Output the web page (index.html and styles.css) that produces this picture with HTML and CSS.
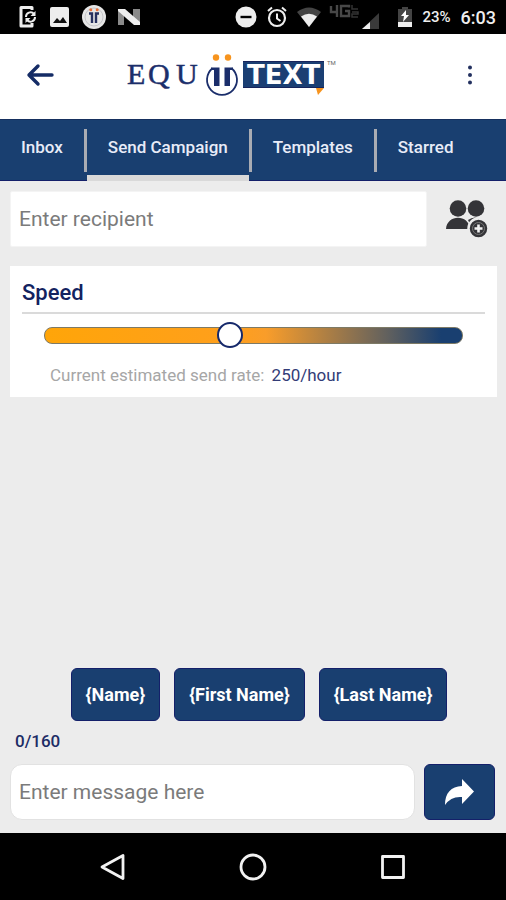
FILE: index.html
```html
<!DOCTYPE html>
<html lang="en">
<head>
<meta charset="utf-8">
<meta name="viewport" content="width=device-width, initial-scale=1">
<title>EquiiText – Send Campaign</title>
<link rel="stylesheet" href="styles.css">
</head>
<body>
<div class="status">
  <div class="status-group status-left">
    <svg width="20" height="24" viewBox="0 0 20 24" aria-hidden="true"><path d="M14 5V2.500H3V21h11v-3" fill="none" stroke="#eee" stroke-width="3" stroke-linejoin="round"/><path d="M8 12a4.500 4.500 0 0 1 8-3M17 12a4.500 4.500 0 0 1-8 3" fill="none" stroke="#eee" stroke-width="2"/><path d="M17.500 6v5h-5zM7.500 18v-5h5z" fill="#eee"/></svg>
    <svg width="20" height="20" viewBox="0 0 20 20" aria-hidden="true"><rect x="0" y="0" width="19" height="20" rx="2" fill="#eee"/><path d="M3 16l4-5 3 3 3-4 4 6z" fill="#111"/></svg>
    <svg width="24" height="24" viewBox="0 0 24 24" aria-hidden="true"><circle cx="12" cy="12" r="12" fill="#e6e6e6"/><circle cx="12" cy="12" r="9" fill="none" stroke="#c4c4c8"/><path d="M7 8.500h3V18M17 8.500h-3V18" fill="none" stroke="#26305f" stroke-width="2.400"/><circle cx="8.800" cy="4.800" r="1.500" fill="#e8703a"/><circle cx="15.200" cy="4.800" r="1.500" fill="#e8703a"/></svg>
    <svg width="22" height="18" viewBox="0 0 22 18" aria-hidden="true"><path d="M0 3l6 0v14H0zM15 1h7v14h-7z" fill="#8a8a8a"/><path d="M0 1h7l15 13v3h-6L0 3z" fill="#eee"/></svg>
  </div>
  <div class="status-group status-right">
    <svg width="22" height="22" viewBox="0 0 22 22" aria-hidden="true"><circle cx="11" cy="11" r="10.500" fill="#eee"/><path d="M5.500 11h11" stroke="#000" stroke-width="2.400"/></svg>
    <svg width="20" height="22" viewBox="0 0 20 22" aria-hidden="true"><circle cx="10" cy="12" r="8" fill="none" stroke="#eee" stroke-width="2.200"/><path d="M10 7.500V12.500l3.500 2.500M1 5l4-3.500M19 5l-4-3.500" fill="none" stroke="#eee" stroke-width="2"/></svg>
    <svg width="24" height="20" viewBox="0 0 24 20" aria-hidden="true"><path d="M0 5Q12-4 24 5L12 20z" fill="#444"/><path d="M4 9.500Q12 4 20 9.500L12 20z" fill="#eee"/></svg>
    <svg class="signal" width="52" height="26" viewBox="0 0 52 26" aria-hidden="true"><path d="M4 2v6h7M10 1v12M22 3.500V2H14v10h8V7h-4" fill="none" stroke="#484848" stroke-width="2.400"/><path d="M25 1v4h6M25 8h6v2h-6v3h6" fill="none" stroke="#333" stroke-width="1.500"/><path d="M35 25L52 9v16z" fill="#3a3a3a"/><path d="M35 25l8-7v7z" fill="#eee"/></svg>
    <svg width="14" height="20" viewBox="0 0 14 20" aria-hidden="true"><path d="M4 0h6v2h4v13H0V2h4z" fill="#444"/><path d="M0 15h14v5H0z" fill="#eee"/><path d="M8 3l-5 6h3l-1 6 6-7H8z" fill="#fff"/></svg>
    <span class="battery">23%</span>
    <span class="clock">6:03</span>
  </div>
</div>

<header class="header">
  <button class="icon-button" type="button" aria-label="Back">
    <svg width="28" height="24" viewBox="0 0 28 24"><path d="M26 12H3M12 3L3 12l9 9" fill="none" stroke="#152c66" stroke-width="3.400" stroke-linecap="round" stroke-linejoin="round"/></svg>
  </button>
  <svg class="logo" width="210" height="44" viewBox="0 0 210 44" role="img" aria-label="EquiiText">
    <g class="logo-equ"><text x="0" y="31">E</text><text x="21" y="31">Q</text><text x="49" y="31">U</text></g>
    <path d="M85.500 15.200A15 15 0 1 0 104.500 15.200" fill="none" stroke="#1b2e6b" stroke-width="1.800"/>
    <path d="M84 14.500h8.500V33H87V17h-3zM106 14.500h-8.500V33h5.500V17h3z" fill="#1b2e6b"/>
    <circle cx="89" cy="4.500" r="3.200" fill="#f7941e"/><circle cx="101" cy="4.500" r="3.200" fill="#f7941e"/>
    <rect x="116" y="8" width="81" height="27" fill="#1b3f73"/>
    <path d="M116 8.500h81M116 34.500h81" stroke="#16245c"/>
    <path d="M189 35h8l-6 7z" fill="#f7941e"/>
    <text class="logo-text" x="120" y="31">TEXT</text>
    <text class="logo-tm" x="200" y="12">TM</text>
  </svg>
  <button class="icon-button" type="button" aria-label="More options">
    <svg width="6" height="20" viewBox="0 0 6 20"><g fill="#22305f"><circle cx="3" cy="2.500" r="2"/><circle cx="3" cy="10" r="2"/><circle cx="3" cy="17.500" r="2"/></g></svg>
  </button>
</header>

<nav class="tabs" aria-label="Sections">
  <a class="tab" href="#inbox">Inbox</a>
  <a class="tab tab-active" href="#campaign" aria-current="page">Send Campaign</a>
  <a class="tab" href="#templates">Templates</a>
  <a class="tab" href="#starred">Starred</a>
</nav>

<main class="main">
  <div class="recipient-row">
    <input class="field recipient" type="text" placeholder="Enter recipient" aria-label="Recipient">
    <button class="contacts" type="button" aria-label="Add contacts">
      <svg width="42" height="38" viewBox="0 0 42 38"><g fill="#343438"><circle cx="12" cy="8.500" r="8.300"/><circle cx="30" cy="8.500" r="8.300"/><path d="M0 29C1 14 23 14 24 29zM22 20Q29 15 35 20L24 24z"/><circle cx="32.500" cy="28.500" r="10" stroke="#ececec" stroke-width="2.500"/></g><circle cx="32.500" cy="28.500" r="6" fill="none" stroke="#777" stroke-width="1"/><path d="M32.500 24.500v8M28.500 28.500h8" stroke="#f2f2f2" stroke-width="2.600"/></svg>
    </button>
  </div>

  <section class="card">
    <h2 class="card-title"><label for="speed">Speed</label></h2>
    <div class="card-body">
      <input class="slider" id="speed" type="range" min="0" max="100" value="44">
      <p class="rate">Current estimated send rate: <output class="rate-value" for="speed">250/hour</output></p>
    </div>
  </section>

  <form class="composer">
    <div class="chips">
      <button class="chip" type="button">{Name}</button>
      <button class="chip" type="button">{First Name}</button>
      <button class="chip" type="button">{Last Name}</button>
    </div>
    <div class="counter">0/160</div>
    <div class="message-row">
      <input class="field message" type="text" placeholder="Enter message here" aria-label="Message">
      <button class="send" type="button" aria-label="Send">
        <svg width="30" height="26" viewBox="0 0 30 26"><path d="M17 0l12 12.500L17 25v-7Q6 17 0 26C0 14 6 7.500 17 7z" fill="#fff"/></svg>
      </button>
    </div>
  </form>
</main>

<div class="system-nav">
  <button class="nav-button" type="button" aria-label="System back"><svg width="28" height="28" viewBox="0 0 28 28"><path d="M24 2.500v23L3 14z" fill="none" stroke="#f2f2f2" stroke-width="2.800" stroke-linejoin="round"/></svg></button>
  <button class="nav-button" type="button" aria-label="Home"><svg width="28" height="28" viewBox="0 0 28 28"><circle cx="14" cy="14" r="12" fill="none" stroke="#f2f2f2" stroke-width="2.800"/></svg></button>
  <button class="nav-button" type="button" aria-label="Recent apps"><svg width="28" height="28" viewBox="0 0 28 28"><rect x="3.500" y="3.500" width="21" height="21" fill="none" stroke="#f2f2f2" stroke-width="2.800" stroke-linejoin="round"/></svg></button>
</div>
</body>
</html>
```
FILE: styles.css
```css
* { box-sizing: border-box; }

body {
  margin: 0;
  min-height: 100vh;
  display: flex;
  flex-direction: column;
  background: #ececec;
  font-family: Roboto, "Liberation Sans", sans-serif;
}

button {
  border: 0;
  padding: 0;
  background: none;
  font-family: inherit;
  cursor: pointer;
}

svg { display: block; }

.status {
  height: 34px;
  padding: 0 10px 0 18px;
  display: flex;
  justify-content: space-between;
  align-items: center;
  background: #000;
  color: #eee;
}
.status-group { display: flex; align-items: center; }
.status-left { gap: 12px; }
.status-right { gap: 10px; }
.signal { margin: 0 9px 0 -4px; }
.battery { font-size: 15px; font-weight: 500; }
.clock { font-size: 18px; font-weight: 500; }

.header {
  height: 85px;
  padding: 0 16px 3px 20px;
  display: flex;
  align-items: center;
  background: #fff;
}
.icon-button {
  width: 40px;
  height: 48px;
  display: grid;
  place-items: center;
}
.logo { margin: 0 auto 0 67px; }
.logo-equ {
  font: 30px "Liberation Serif", serif;
  fill: #1b2e6b;
  stroke: #1b2e6b;
  stroke-width: 0.5px;
}
.logo-text {
  font: bold 26px "DejaVu Sans", sans-serif;
  fill: #fff;
}
.logo-tm {
  font: 6px Roboto, sans-serif;
  fill: #666;
}

.tabs {
  height: 62px;
  display: flex;
  background: #193f70;
  border-top: 1px solid #16305f;
  border-bottom: 1px solid #14206a;
}
.tab {
  position: relative;
  padding: 0 21px 6px;
  display: flex;
  align-items: center;
  color: #e8ecf8;
  font-size: 17px;
  font-weight: 500;
  text-decoration: none;
}
.tab + .tab { margin-left: 3px; }
.tab + .tab::before {
  content: "";
  position: absolute;
  left: -3px;
  top: 9px;
  bottom: 8px;
  width: 3px;
  background: #a9acb3;
}
.tab-active::after {
  content: "";
  position: absolute;
  left: 0;
  right: 0;
  bottom: -1px;
  height: 6px;
  background: #d9d9d9;
}

.main {
  flex: 1;
  padding: 10px 9px 13px 10px;
  display: flex;
  flex-direction: column;
}

.field {
  flex: 1;
  min-width: 0;
  height: 56px;
  padding: 0 8px;
  border: 1px solid #e2e2e2;
  background: #fff;
  color: #333;
  font-family: inherit;
  font-size: 21px;
}
.field::placeholder { color: #7b7b7b; opacity: 1; }

.recipient-row {
  display: flex;
  align-items: center;
  gap: 19px;
  padding-right: 9px;
}
.recipient { border-color: #f4f4f4; border-radius: 2px; }

.card {
  margin-top: 19px;
  padding: 12px 12px 8px;
  background: #fff;
}
.card-title {
  margin: 0;
  padding-bottom: 4px;
  border-bottom: 2px solid #dadada;
  color: #13225f;
  font-size: 22px;
  line-height: 30px;
  font-weight: 500;
}
.card-body { padding: 8px 22px 0; }

.slider {
  -webkit-appearance: none;
  appearance: none;
  display: block;
  width: 100%;
  height: 27px;
  margin: 0;
  background: none;
}
.slider::-webkit-slider-runnable-track {
  height: 17px;
  border: 1px solid #7d7a66;
  border-radius: 8px;
  background: linear-gradient(90deg, #ffa509 0%, #ff9f1c 45%, #f99d2a 53%, #62615e 82%, #193f70 95%);
}
.slider::-webkit-slider-thumb {
  -webkit-appearance: none;
  width: 26px;
  height: 26px;
  margin-top: -6px;
  border: 2px solid #16296b;
  border-radius: 50%;
  background: #fff;
}

.rate {
  margin: 12px 0 0;
  padding-left: 6px;
  color: #a6a6a6;
  font-size: 17px;
  line-height: 28px;
}
.rate-value { margin-left: 3px; color: #333c77; }

.composer { margin-top: auto; }
.chips {
  display: flex;
  justify-content: center;
  gap: 14px;
  padding-left: 11px;
}
.chip, .send {
  background: #193f70;
  border: 1px solid #14206a;
  border-radius: 6px;
  color: #fff;
}
.chip {
  height: 53px;
  padding: 0 14px;
  font-size: 18px;
  font-weight: 700;
}
.counter {
  padding: 10px 5px 13px;
  color: #1d2c66;
  font-size: 17px;
  line-height: 20px;
  font-weight: 500;
}
.message-row { display: flex; gap: 9px; }
.message { border-radius: 12px; }
.send {
  width: 71px;
  height: 56px;
  margin-right: 2px;
  display: grid;
  place-items: center;
}

.system-nav {
  height: 67px;
  display: flex;
  justify-content: center;
  align-items: center;
  gap: 112px;
  background: #000;
}
```
